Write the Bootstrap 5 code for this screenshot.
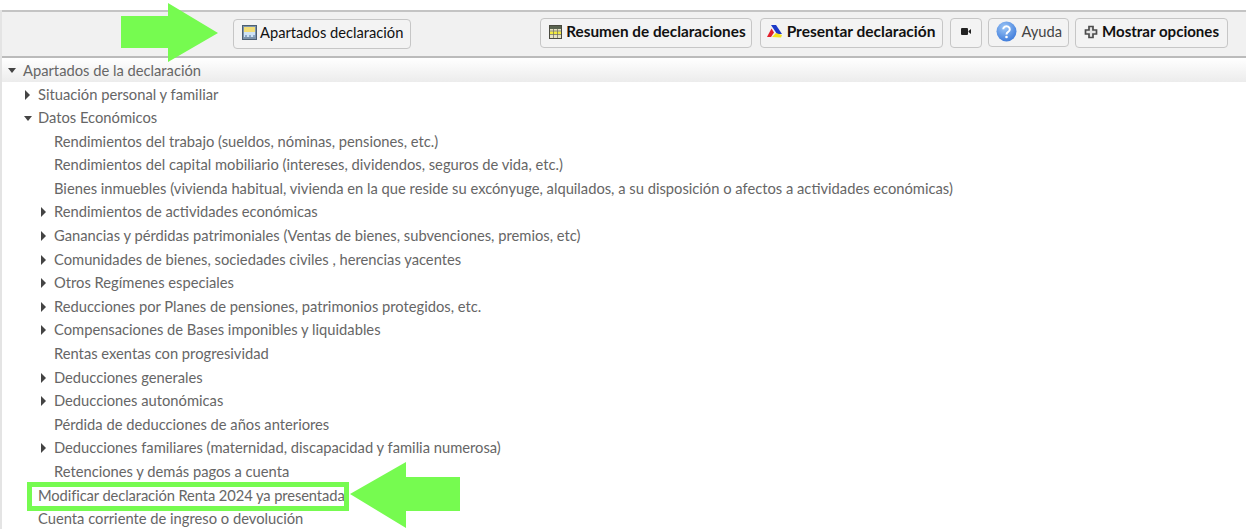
<!DOCTYPE html>
<html lang="es">
<head>
<meta charset="utf-8">
<title>Apartados declaración</title>
<link href="https://cdn.jsdelivr.net/npm/bootstrap@5.3.0/dist/css/bootstrap.min.css" rel="stylesheet">
<style>
html,body{height:529px;overflow:hidden;background:#fff}
body{font-family:"Lato","Noto Sans",sans-serif;font-size:14.73px;color:#666;position:relative}
.shell{margin-top:10px;border-left:2px solid #e4e4e4;height:519px;overflow:hidden}
.tbar{height:48px;background:#f1f1f1;border-top:2px solid #c4c4c4;border-bottom:2px solid #bbb;padding:6px 18px 0 231px}
.tbtn{height:30px;display:inline-flex;align-items:center;background:#f3f3f3;border:1px solid #c6c6c6;border-radius:4px;color:#111;font-size:14.7px;padding:0 0 3px;white-space:nowrap;line-height:1;margin-top:1px}
.tbtn b{font-weight:700;font-size:15.3px}
.tbtn svg{flex:none}
.t-apart{padding-left:8px;padding-right:7px;gap:3px;margin-top:1px}
.t-res{padding-left:8px;padding-right:5px;gap:4px;margin-right:2px;margin-top:0}
.t-pre{padding-left:6px;padding-right:7px;gap:4px;margin-right:1px;margin-top:0}
.t-pre b{font-size:15.5px}
.t-vid{width:32px;justify-content:center;padding-left:0;margin-top:0}
.t-ayu{height:29px;padding-left:7px;padding-right:6px;gap:4px;margin-top:0;padding-bottom:2px;color:#444}
.t-mos{padding-left:8px;padding-right:8px;gap:4px;margin-top:0}
.t-mos b{font-size:15.05px}
.tb-gap{gap:6px}
.shead{height:24px;line-height:24px;background:linear-gradient(#fff,#ececec);padding-left:21px;position:relative;color:#666}
.tree{list-style:none;margin:0;padding:.5px 0 0}
.tree li{height:23.6px;line-height:23.6px;white-space:nowrap;position:relative}
.tree li.tight{letter-spacing:-.1px}
.lv1{padding-left:36px}
.lv2{padding-left:52px}
.caret-r,.caret-d{position:absolute;width:0;height:0}
.caret-r{border-left:5px solid #444;border-top:5px solid transparent;border-bottom:5px solid transparent;top:7px}
.caret-d{border-top:5px solid #444;border-left:4.500px solid transparent;border-right:4.500px solid transparent;top:10px}
.lv1 .caret-r{left:23px}.lv1 .caret-d{left:22px}.lv2 .caret-r{left:39px}
.shead .caret-d{left:6px;top:10px}
.framed{position:absolute;left:27px;top:482px;width:322px;height:29px;border:5px solid #76fb50;pointer-events:none}
.arrow{position:absolute;pointer-events:none}
.arrow-top{left:121px;top:2px}
.arrow-low{left:349px;top:461px}
</style>
</head>
<body>
<div class="shell">
  <div class="tbar d-flex align-items-start justify-content-between">
    <button class="tbtn t-apart" type="button">
      <svg width="15" height="15" viewBox="0 0 15 15"><rect x=".5" y=".5" width="14" height="14" fill="#7d94ab" stroke="#4d5f73"/><rect x="2" y="2" width="11" height="5" fill="#f2dd76"/><rect x="2" y="7" width="11" height="5" fill="#cfe3f5"/><path d="M3 11h2M7 11h2M11 11h2" stroke="#4a6f96"/></svg>
      <span>Apartados declaración</span>
    </button>
    <div class="d-flex tb-gap">
      <button class="tbtn t-res" type="button">
        <svg width="13" height="14" viewBox="0 0 13 14"><rect x=".5" y=".5" width="12" height="13" fill="#e6e2c4" stroke="#4a4a40"/><rect x="1" y="1" width="11" height="3" fill="#5a6450"/><rect x="1" y="6.500" width="11" height="2.500" fill="#f4ec3f"/><path d="M1 6h11M1 9.500h11M4.500 4v9M8.500 4v9" stroke="#6a6a5a" stroke-width=".7"/></svg>
        <b>Resumen de declaraciones</b>
      </button>
      <button class="tbtn t-pre" type="button">
        <svg width="16" height="15" viewBox="0 0 16 15"><path d="M4 1h5l6 9h-5z" fill="#1c39c8"/><path d="M4.500 4.500 7 8.500 4 13H0z" fill="#e2202c"/><path d="M5 13l4-4 6 2-1 2.500z" fill="#f5e21c"/></svg>
        <b>Presentar declaración</b>
      </button>
      <button class="tbtn t-vid" type="button" aria-label="Vídeo">
        <svg width="10" height="7" viewBox="0 0 10 7"><rect width="7" height="7" rx="1" fill="#222"/><path d="M7.500 3 10 1v5L7.500 4z" fill="#222"/></svg>
      </button>
      <button class="tbtn t-ayu" type="button">
        <svg width="21" height="21" viewBox="0 0 21 21"><defs><radialGradient id="hq" cx=".4" cy=".3" r=".85"><stop offset="0" stop-color="#9cc6f6"/><stop offset="1" stop-color="#2f6fd6"/></radialGradient></defs><circle cx="10.500" cy="10.500" r="10" fill="url(#hq)"/><path d="M7.200 8.200a3.300 3 0 1 1 5 2.600c-1.200.8-1.700 1.300-1.700 2.600" fill="none" stroke="#fff" stroke-width="2"/><circle cx="10.500" cy="16" r="1.300" fill="#fff"/></svg>
        <span>Ayuda</span>
      </button>
      <button class="tbtn t-mos" type="button">
        <svg width="14" height="14" viewBox="0 0 14 14"><path d="M5 1.500h4v3.500h3.500v4H9v3.500H5V9H1.500V5H5z" fill="#e4e4e4" stroke="#4c4c4c" stroke-width="1.700"/></svg>
        <b>Mostrar opciones</b>
      </button>
    </div>
  </div>
  <div class="shead"><i class="caret-d"></i>Apartados de la declaración</div>
  <ul class="tree">
    <li class="lv1"><i class="caret-r"></i>Situación personal y familiar</li>
    <li class="lv1"><i class="caret-d"></i>Datos Económicos</li>
    <li class="lv2">Rendimientos del trabajo (sueldos, nóminas, pensiones, etc.)</li>
    <li class="lv2">Rendimientos del capital mobiliario (intereses, dividendos, seguros de vida, etc.)</li>
    <li class="lv2">Bienes inmuebles (vivienda habitual, vivienda en la que reside su excónyuge, alquilados, a su disposición o afectos a actividades económicas)</li>
    <li class="lv2"><i class="caret-r"></i>Rendimientos de actividades económicas</li>
    <li class="lv2"><i class="caret-r"></i>Ganancias y pérdidas patrimoniales (Ventas de bienes, subvenciones, premios, etc)</li>
    <li class="lv2"><i class="caret-r"></i>Comunidades de bienes, sociedades civiles , herencias yacentes</li>
    <li class="lv2"><i class="caret-r"></i>Otros Regímenes especiales</li>
    <li class="lv2"><i class="caret-r"></i>Reducciones por Planes de pensiones, patrimonios protegidos, etc.</li>
    <li class="lv2"><i class="caret-r"></i>Compensaciones de Bases imponibles y liquidables</li>
    <li class="lv2">Rentas exentas con progresividad</li>
    <li class="lv2"><i class="caret-r"></i>Deducciones generales</li>
    <li class="lv2"><i class="caret-r"></i>Deducciones autonómicas</li>
    <li class="lv2">Pérdida de deducciones de años anteriores</li>
    <li class="lv2"><i class="caret-r"></i>Deducciones familiares (maternidad, discapacidad y familia numerosa)</li>
    <li class="lv2">Retenciones y demás pagos a cuenta</li>
    <li class="lv1 tight">Modificar declaración Renta 2024 ya presentada</li>
    <li class="lv1">Cuenta corriente de ingreso o devolución</li>
  </ul>
</div>
<div class="framed"></div>
<svg class="arrow arrow-top" width="98" height="61" viewBox="0 0 98 61"><path d="M0 14H47V1L97 31 47 60V46H0z" fill="#76fb50"/></svg>
<svg class="arrow arrow-low" width="112" height="68" viewBox="0 0 112 68"><path d="M1 33 57 1V16H111V50H57V67z" fill="#76fb50"/></svg>
</body>
</html>
